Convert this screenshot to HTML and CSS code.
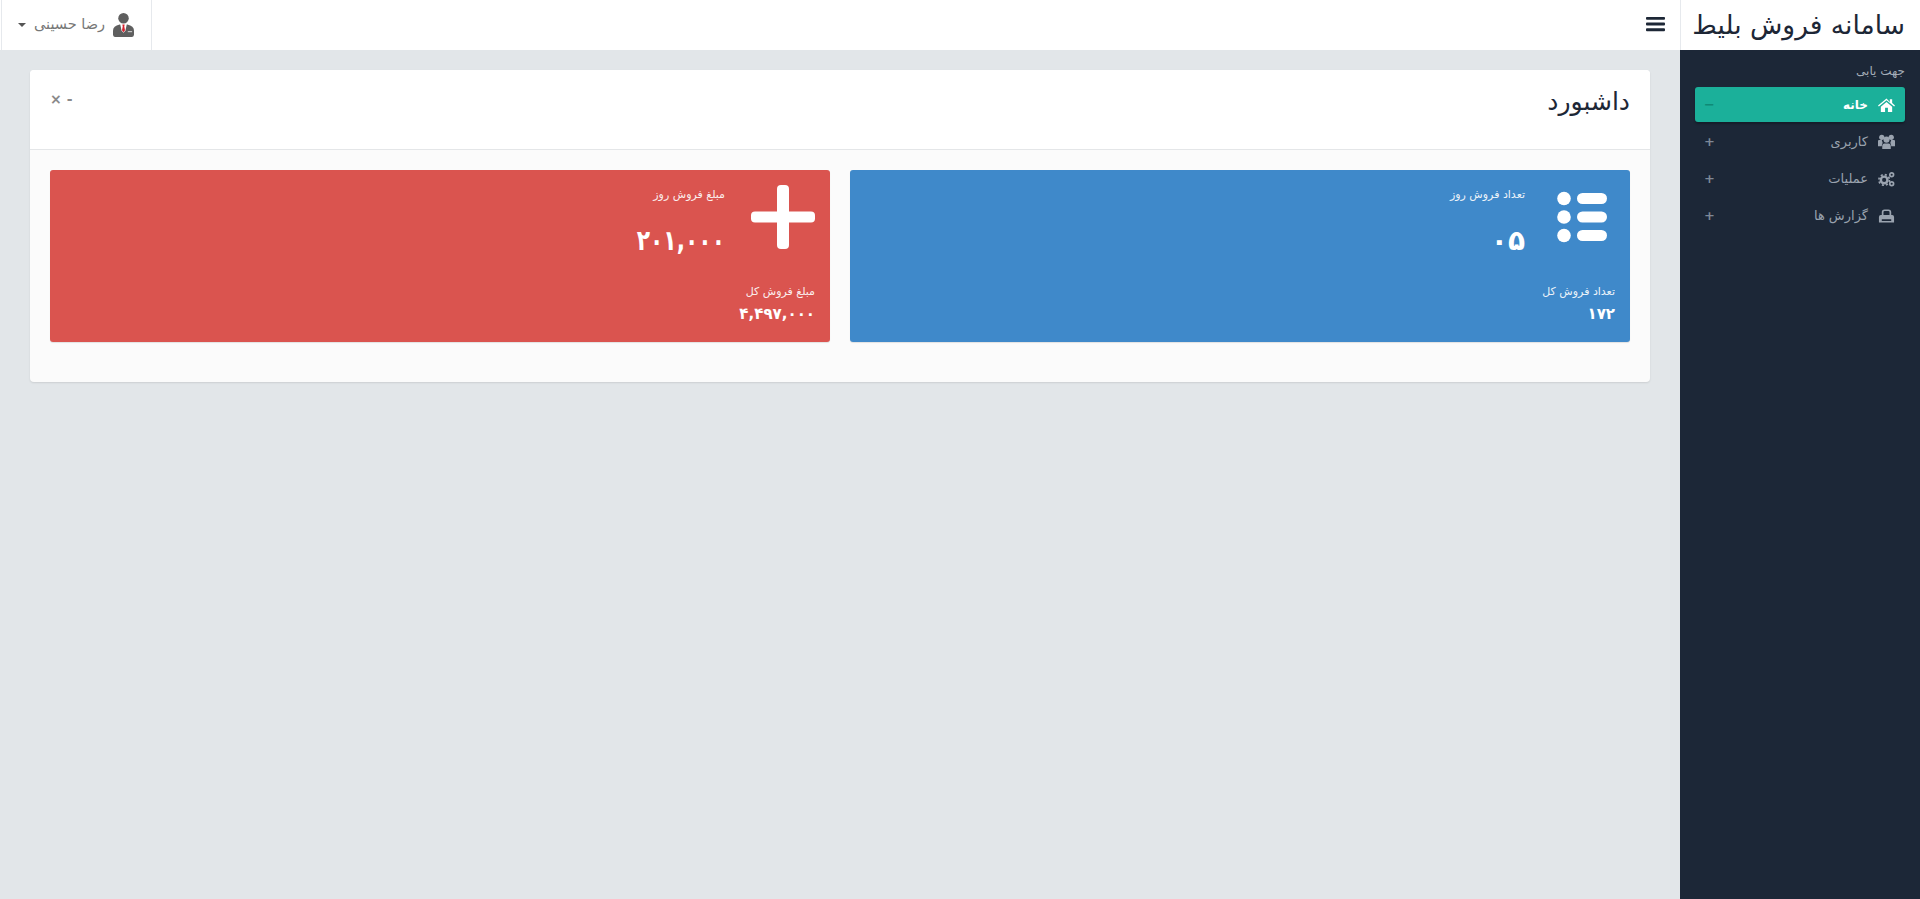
FILE: index.html
```html
<!DOCTYPE html>
<html dir="rtl" lang="fa">
<head>
    <meta charset="utf-8">
    <title>سامانه فروش بلیط</title>
    <link rel="stylesheet" href="styles.css">
</head>
<body>
    <aside class="sidebar">
        <div class="logo">سامانه فروش بلیط</div>
        <div class="nav-title">جهت یابی</div>
        <ul class="nav">
            <li class="nav-item active">
                <svg class="nav-icon" viewBox="0 0 18 16"><path d="M9 1 0 8.500l.9 1L9 3l8.100 6.500.9-1-3-2.600V2h-2.500v2.800zM3 9.800V15.500h4.500v-4.500h3v4.500H15V9.800L9 4.900z"/></svg>
                <span class="nav-text">خانه</span>
                <span class="nav-sign">−</span>
            </li>
            <li class="nav-item">
                <svg class="nav-icon" viewBox="0 0 18 16"><circle cx="4" cy="3" r="2.800"/><circle cx="14" cy="3" r="2.800"/><circle cx="9" cy="5.500" r="3.200"/><path d="M0 7q0-1 1-1h3l1 3q-1 1-1 3.500H0zM18 7q0-1-1-1h-3l-1 3q1 1 1 3.500h4zM4.500 12.500Q4.500 9.500 7 9.500h4q2.500 0 2.500 3v3h-9z"/></svg>
                <span class="nav-text">کاربری</span>
                <span class="nav-sign">+</span>
            </li>
            <li class="nav-item">
                <svg class="nav-icon" viewBox="0 0 18 16">
                    <circle cx="6.500" cy="9" r="3.500" fill="none" stroke="currentColor" stroke-width="2.600"/>
                    <circle cx="6.500" cy="9" r="5.600" fill="none" stroke="currentColor" stroke-width="1.800" stroke-dasharray="2.200 2.200"/>
                    <circle cx="14.500" cy="3.500" r="2" fill="none" stroke="currentColor" stroke-width="1.800"/>
                    <circle cx="14.500" cy="13" r="2" fill="none" stroke="currentColor" stroke-width="1.800"/>
                </svg>
                <span class="nav-text">عملیات</span>
                <span class="nav-sign">+</span>
            </li>
            <li class="nav-item">
                <svg class="nav-icon" viewBox="0 0 18 16"><path d="M4 4q0-3 3-3h4q3 0 3 3v3h-1.800V4q0-1.300-1.200-1.300H7Q5.800 2.700 5.800 4v3H4zM1 9Q1 7 3 7h12q2 0 2 2v6H1zM4 11.500v1.800h10v-1.800z"/></svg>
                <span class="nav-text">گزارش ها</span>
                <span class="nav-sign">+</span>
            </li>
        </ul>
    </aside>

    <div class="main">
        <header class="topbar">
            <svg class="menu-btn" viewBox="0 0 20 16"><path d="M0 1.500Q0 .5 1 .5h18q1 0 1 1v1q0 1-1 1H1q-1 0-1-1zM0 7.500q0-1 1-1h18q1 0 1 1v1q0 1-1 1H1q-1 0-1-1zM0 13.500q0-1 1-1h18q1 0 1 1v1q0 1-1 1H1q-1 0-1-1z"/></svg>
            <div class="user">
                <svg class="avatar" viewBox="0 0 22 26">
                    <circle cx="11" cy="6" r="5.500" fill="#5f5f5f"/>
                    <path d="M2 25.500q-2 0-2-2.500v-4q0-5 7-6.500h8q7 1.500 7 6.500v4q0 2.500-2 2.500z" fill="#5f5f5f"/>
                    <path d="M7.500 12h7L13 19l-2 2-2-2z" fill="#fff"/>
                    <path d="M9.800 12.500h2.400l-.4 2 .8 4-1.600 2-1.600-2 .8-4z" fill="#d8222f"/>
                    <path d="M15.500 19.500h4.500v1h-4.500z" fill="#ddd"/>
                </svg>
                <span class="user-name">رضا حسینی</span>
                <span class="caret"></span>
            </div>
        </header>

        <main class="content">
            <section class="panel">
                <div class="panel-head">
                    <h2 class="panel-title">داشبورد</h2>
                    <div class="panel-tools"><span>-</span><span>×</span></div>
                </div>
                <div class="panel-body">
                    <div class="stat stat-blue">
                        <svg class="stat-icon" viewBox="0 0 68 68">
                            <circle cx="17" cy="13.500" r="6.800"/><rect x="30" y="8" width="30" height="11" rx="5.500"/>
                            <circle cx="17" cy="32" r="6.800"/><rect x="30" y="26.500" width="30" height="11" rx="5.500"/>
                            <circle cx="17" cy="50.500" r="6.800"/><rect x="30" y="45" width="30" height="11" rx="5.500"/>
                        </svg>
                        <div class="stat-top">
                            <div class="stat-label">تعداد فروش روز</div>
                            <div class="stat-value">۰۵</div>
                        </div>
                        <div class="stat-bottom">
                            <div class="stat-label">تعداد فروش کل</div>
                            <div class="stat-total">۱۷۲</div>
                        </div>
                    </div>
                    <div class="stat stat-red">
                        <svg class="stat-icon" viewBox="0 0 68 68">
                            <rect x="30" y="0" width="12" height="64" rx="4"/>
                            <rect x="4" y="26.500" width="64" height="11" rx="4"/>
                        </svg>
                        <div class="stat-top">
                            <div class="stat-label">مبلغ فروش روز</div>
                            <div class="stat-value">۲۰۱,۰۰۰</div>
                        </div>
                        <div class="stat-bottom">
                            <div class="stat-label">مبلغ فروش کل</div>
                            <div class="stat-total">۴,۴۹۷,۰۰۰</div>
                        </div>
                    </div>
                </div>
            </section>
        </main>
    </div>
</body>
</html>
```

FILE: styles.css
```css
* {
    box-sizing: border-box;
}
html, body {
    height: 100%;
}
body {
    margin: 0;
    display: flex;
    background-color: #e2e6e9;
    font-family: "DejaVu Sans", "Noto Sans", sans-serif;
    color: #1d2736;
    overflow: hidden;
}

/* sidebar */
.sidebar {
    width: 240px;
    flex: none;
    background-color: #1c2737;
}
.logo {
    height: 50px;
    background-color: #fff;
    border-left: 1px solid #e6e9ed;
    padding-right: 15px;
    font-size: 26.500px;
    line-height: 50px;
    color: #1d2736;
    white-space: nowrap;
}
.nav-title {
    padding: 14px 15px 0;
    height: 37px;
    font-size: 12px;
    line-height: 14px;
    color: #a4adb8;
}
.nav {
    list-style: none;
    margin: 0;
    padding: 0 15px;
}
.nav-item {
    height: 35px;
    margin-bottom: 2px;
    padding: 0 10px;
    display: flex;
    align-items: center;
    gap: 10px;
    border-radius: 3px;
    font-size: 13px;
    color: #9aa3af;
}
.nav-item.active {
    background-color: #1bb09a;
    color: #fff;
    font-weight: bold;
    font-size: 12px;
    box-shadow: 0 2px 2px rgba(0, 0, 0, .25);
}
.nav-icon {
    width: 17px;
    height: 16px;
    fill: currentColor;
}
.nav-text {
    flex: 1;
}
.nav-sign {
    width: 10px;
    font-size: 13px;
    font-weight: bold;
    text-align: center;
    color: #7e8896;
}
.nav-item.active .nav-sign {
    color: #0f8a76;
}

/* top bar */
.main {
    flex: 1;
    min-width: 0;
}
.topbar {
    height: 50px;
    background-color: #fff;
    display: flex;
    align-items: center;
    justify-content: space-between;
    padding-right: 15px;
}
.menu-btn {
    width: 19px;
    height: 16px;
    margin-bottom: 2px;
    fill: #1d2736;
}
.user {
    width: 151px;
    height: 50px;
    margin-left: 1px;
    border-left: 1px solid #e6e9ed;
    border-right: 1px solid #e6e9ed;
    display: flex;
    align-items: center;
    padding-right: 17px;
    gap: 8px;
    font-size: 14.500px;
    color: #777;
}
.avatar {
    width: 21px;
    height: 26px;
}
.user-name {
    padding-bottom: 2px;
}
.caret {
    border-top: 4px solid #555;
    border-left: 4px solid transparent;
    border-right: 4px solid transparent;
}

/* panel */
.content {
    padding: 20px 30px 0;
}
.panel {
    background-color: #fbfbfb;
    border-radius: 4px;
    box-shadow: 0 1px 2px rgba(0, 0, 0, .1);
    height: 312px;
}
.panel-head {
    height: 80px;
    background-color: #fff;
    border-bottom: 1px solid #e4e6e8;
    border-radius: 4px 4px 0 0;
    display: flex;
    justify-content: space-between;
    padding: 16px 20px 0;
}
.panel-title {
    margin: 0;
    font-size: 25px;
    font-weight: normal;
    line-height: 32px;
    color: #1d2736;
}
.panel-tools {
    display: flex;
    gap: 5px;
    padding-top: 3px;
    font-size: 14px;
    font-weight: bold;
    line-height: 20px;
    color: #8a8a8a;
}
.panel-body {
    padding: 20px;
    display: grid;
    grid-template-columns: 1fr 1fr;
    gap: 20px;
}

/* stat boxes */
.stat {
    height: 172px;
    border-radius: 3px;
    padding: 15px;
    color: #fff;
    display: grid;
    grid-template-columns: 68px 1fr;
    grid-template-rows: 99px auto;
    column-gap: 22px;
    box-shadow: 0 1px 1px rgba(0, 0, 0, .1);
}
.stat-blue {
    background-color: #3f89ca;
}
.stat-red {
    background-color: #da544f;
}
.stat-icon {
    width: 68px;
    height: 68px;
    fill: #fff;
}
.stat-top {
    padding-top: 2px;
}
.stat-label {
    font-size: 11px;
    line-height: 16px;
    opacity: .9;
}
.stat-value {
    margin-top: 20px;
    font-size: 28px;
    line-height: 36px;
    font-weight: bold;
}
/* letter-spacing does nothing on these digits, so squeeze the long numbers */
.stat-red .stat-value {
    transform: scaleX(.78);
    transform-origin: right;
}
.stat-bottom {
    grid-column: 1 / 3;
}
.stat-total {
    margin-top: 3px;
    font-size: 16px;
    line-height: 22px;
    font-weight: bold;
    transform: scaleX(.94);
    transform-origin: right;
}
```
